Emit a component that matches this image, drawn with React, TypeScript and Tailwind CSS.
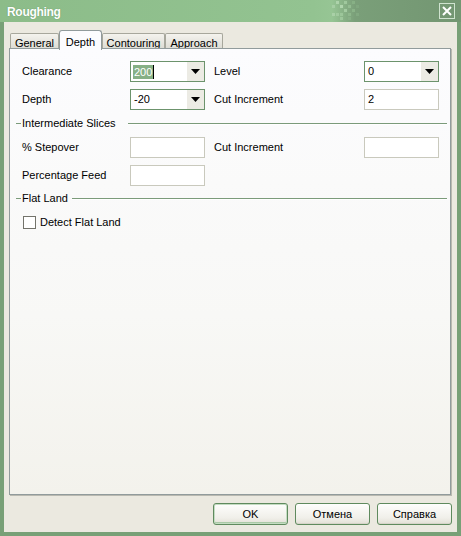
import React from "react";

const font = { fontFamily: '"Liberation Sans", Arial, sans-serif' };

function TitleBar() {
  // little checker squares where the light green fades into the dark one
  const squares = [
    [0, 1, "#a6cea4"], [1, 0, "#add3ab"], [1, 3, "#a1ca9f"], [2, 1, "#b0d5ae"],
    [2, 3, "#9cc69a"], [3, 0, "#9fc89d"], [3, 2, "#a3cba1"], [4, 1, "#93bc91"],
    [4, 3, "#8eb78c"], [5, 0, "#87b085"], [5, 2, "#8ab388"], [6, 3, "#82a981"],
    [0, 3, "#a9d0a7"], [2, 4, "#9ec79c"], [4, 4, "#88b087"], [6, 1, "#80a77f"],
  ] as const;
  return (
    <div className="h-[22px] flex items-center bg-[linear-gradient(90deg,#8cbc89_0%,#93c391_68%,#96c594_72%,#7a9f79_77%,#739672_100%)] relative">
      <span className="pl-[7px] pt-px text-white font-bold text-[12px] tracking-[-0.3px] [text-shadow:0_0_1px_#5d8a5b]">
        Roughing
      </span>
      <svg className="absolute left-[332px] top-0" width="36" height="22">
        {squares.map(([cx, cy, c], i) => (
          <rect key={i} x={cx * 4} y={cy * 4 + 1} width="3" height="3" fill={c} />
        ))}
      </svg>
      <div className="ml-auto mr-[6px] w-[16px] h-[16px] border border-[#cfe3cf] flex items-center justify-center">
        <svg width="10" height="10" viewBox="0 0 10 10">
          <path d="M1 1 L9 9 M9 1 L1 9" stroke="#ffffff" strokeWidth="2" />
        </svg>
      </div>
    </div>
  );
}

function Tab({ label, w, active }: { label: string; w: number; active?: boolean }) {
  if (active)
    return (
      <div
        style={{ width: w }}
        className="h-[20px] -mb-px z-10 bg-[#fcfcfe] border border-b-0 border-[#919b9c] rounded-t-[3px] flex items-start justify-center pt-[3px] text-[11px] text-black whitespace-nowrap"
      >
        {label}
      </div>
    );
  return (
    <div
      style={{ width: w }}
      className="h-[16px] bg-[linear-gradient(#f4f3ee,#dcdbd3)] border border-b-0 border-[#a7a79c] rounded-t-[2px] flex items-center justify-center pt-[3px] text-[11px] text-black whitespace-nowrap"
    >
      {label}
    </div>
  );
}

function Combo({ value, selected }: { value: string; selected?: boolean }) {
  return (
    <div className="w-[75px] h-[21px] border border-[#6c936c] bg-white flex">
      <div className="flex-1 flex items-center pl-[2px] text-[11px]">
        {selected ? (
          <>
            <span className="bg-[#86b085] text-white leading-[14px] px-px">{value}</span>
            <span className="w-px h-[14px] bg-black" />
          </>
        ) : (
          <span className="pl-px">{value}</span>
        )}
      </div>
      <div className="w-[17px] bg-[#ecebe4] flex items-center justify-center">
        <svg width="9" height="5" viewBox="0 0 9 5">
          <path d="M0 0 H9 L4.5 5 Z" fill="#000" />
        </svg>
      </div>
    </div>
  );
}

function Input({ value }: { value?: string }) {
  return (
    <div className="w-[75px] h-[21px] border border-[#c9c9bd] bg-white flex items-center pl-[3px] text-[11px]">
      {value}
    </div>
  );
}

function Label({ text, w }: { text: string; w: number }) {
  return (
    <div style={{ width: w }} className="text-[11px] text-black leading-none whitespace-nowrap">
      {text}
    </div>
  );
}

function Group({ title, tw }: { title: string; tw: number }) {
  return (
    <div className="h-[14px] flex items-center -ml-[6px] mr-[2px]">
      <div className="w-[5px] h-px bg-[#7b9b7a]" />
      <div style={{ width: tw }} className="pl-px text-[11px] leading-none shrink-0 whitespace-nowrap">
        {title}
      </div>
      <div className="flex-1 h-px bg-[#7b9b7a] shadow-[0_1px_0_#ffffff]" />
    </div>
  );
}

function Button({ label, def }: { label: string; def?: boolean }) {
  return (
    <div
      className={
        "w-[75px] h-[22px] rounded-[3px] border border-[#5f8a5e] bg-[linear-gradient(#fefefd,#f0efe9_70%,#e2e0d6)] flex items-center justify-center text-[11px] text-black " +
        (def ? "shadow-[inset_0_0_0_1px_#c4dcc2,inset_0_-2px_0_#a9c9a6]" : "shadow-[inset_0_-1px_0_#d6d4ca]")
      }
    >
      {label}
    </div>
  );
}

export default function App() {
  return (
    <div style={font} className="w-[461px] h-[536px] flex flex-col bg-[#ebe9e0] overflow-hidden">
      <TitleBar />
      <div className="flex-1 flex flex-col border-x-4 border-b-4 border-[#78a077] pl-[5px] pr-[5px] pt-[7px] pb-[7px]">
        <div className="h-[20px] flex items-end pl-px">
          <Tab label="General" w={49} />
          <Tab label="Depth" w={43} active />
          <Tab label="Contouring" w={63} />
          <Tab label="Approach" w={58} />
        </div>
        <div className="flex-1 mr-px -mt-px border border-[#919b9c] bg-[linear-gradient(#fcfcfe,#f8f8f6_60%,#f3f2ec)] shadow-[1px_1px_0_#b9b9b0] pl-3 pr-[1px] pt-3">
          <div className="flex items-center h-[21px]">
            <Label text="Clearance" w={108} />
            <Combo value="200" selected />
            <div className="w-[9px]" />
            <Label text="Level" w={150} />
            <Combo value="0" />
          </div>
          <div className="flex items-center h-[21px] mt-[7px]">
            <Label text="Depth" w={108} />
            <Combo value="-20" />
            <div className="w-[9px]" />
            <Label text="Cut Increment" w={150} />
            <Input value="2" />
          </div>
          <div className="mt-[6px]">
            <Group title="Intermediate Slices" tw={107} />
          </div>
          <div className="flex items-center h-[21px] mt-[7px]">
            <Label text="% Stepover" w={108} />
            <Input />
            <div className="w-[9px]" />
            <Label text="Cut Increment" w={150} />
            <Input />
          </div>
          <div className="flex items-center h-[21px] mt-[7px]">
            <Label text="Percentage Feed" w={108} />
            <Input />
          </div>
          <div className="mt-[5px]">
            <Group title="Flat Land" tw={51} />
          </div>
          <div className="flex items-center h-[13px] mt-[11px] ml-px gap-[4px]">
            <div className="w-[13px] h-[13px] border border-[#73736b] bg-white" />
            <span className="text-[11px] leading-none">Detect Flat Land</span>
          </div>
        </div>
        <div className="flex justify-end gap-[7px] mt-[8px]">
          <Button label="OK" def />
          <Button label="Отмена" />
          <Button label="Справка" />
        </div>
      </div>
    </div>
  );
}
